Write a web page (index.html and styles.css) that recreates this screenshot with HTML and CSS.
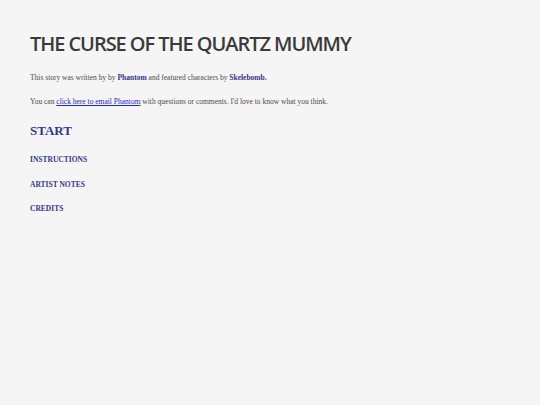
FILE: index.html
```html
<!DOCTYPE html>
<html>
<head>
<meta charset="utf-8">
<link rel="stylesheet" href="styles.css">
</head>
<body>
<main class="page">
  <h1 class="title">THE CURSE OF THE QUARTZ MUMMY</h1>
  <p class="text">This story was written by by <strong class="name">Phantom</strong> and featured characters by <strong class="name">Skelebomb.</strong></p>
  <p class="text">You can <a class="mail" href="#">click here to email Phantom</a> with questions or comments. I'd love to know what you think.</p>
  <nav class="menu">
    <a class="start" href="#">START</a>
    <a class="item" href="#">INSTRUCTIONS</a>
    <a class="item" href="#">ARTIST NOTES</a>
    <a class="item" href="#">CREDITS</a>
  </nav>
</main>
</body>
</html>
```
FILE: styles.css
```css
html, body {
  margin: 0;
  padding: 0;
  background: #f5f5f5;
}
.page {
  padding: 32px 30px;
  font-family: "Liberation Serif", serif;
  color: #4a4a4a;
}
.title {
  margin: 0 0 17px;
  font-family: "Open Sans", sans-serif;
  font-weight: 600;
  font-size: 20px;
  line-height: 24px;
  color: #3a3a3a;
  letter-spacing: -1.05px;
}
.text {
  margin: 0 0 14px;
  font-size: 7.5px;
  line-height: 10px;
}
.name {
  color: #36368a;
}
.mail {
  color: #2626b8;
}
.menu {
  display: flex;
  flex-direction: column;
  align-items: flex-start;
  margin-top: -2px;
}
.start {
  font-weight: bold;
  font-size: 13px;
  line-height: 24px;
  color: #36368a;
  text-decoration: none;
  margin-bottom: 5px;
}
.item {
  font-weight: bold;
  font-size: 7.5px;
  line-height: 24.5px;
  color: #36368a;
  text-decoration: none;
}
```
